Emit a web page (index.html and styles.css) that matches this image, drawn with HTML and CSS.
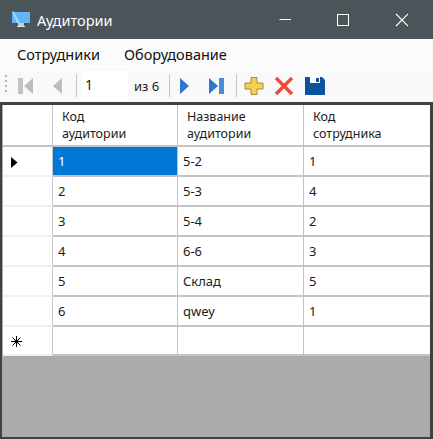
FILE: index.html
```html
<!DOCTYPE html>
<html>
<head>
  <meta charset="UTF-8">
  <title>Аудитории</title>
  <link rel="stylesheet" href="styles.css">
</head>
<body>
  <div class="window">
    <div class="titlebar">
      <svg class="app-icon" width="19" height="17" viewBox="0 0 19 17">
        <rect x="0" y="1" width="18" height="11" fill="#63b5f7"/>
        <path d="M0 0 L5 12 H8 L2 1 Z" fill="#a9d8fb"/>
        <rect x="6" y="12" width="6" height="3" fill="#c4ccd1"/>
        <rect x="5" y="15" width="8" height="1" fill="#e3e7ea"/>
      </svg>
      <span class="title">Аудитории</span>
      <div class="win-buttons">
        <svg width="14" height="14" viewBox="0 0 14 14"><path d="M1.5 6.5 H13" stroke="#fff" stroke-width="1"/></svg>
        <svg width="14" height="14" viewBox="0 0 14 14"><rect x="1.5" y="1.5" width="11" height="11" fill="none" stroke="#fff"/></svg>
        <svg width="14" height="14" viewBox="0 0 14 14"><path d="M2 1 L14 13 M14 1 L2 13" stroke="#fff" stroke-width="1.1"/></svg>
      </div>
    </div>

    <div class="menu">
      <span>Сотрудники</span>
      <span>Оборудование</span>
    </div>

    <div class="toolbar">
      <svg class="grip" width="4" height="24" viewBox="0 0 4 24">
        <g fill="#b4b4b4"><rect x="1" y="1" width="2" height="2"/><rect x="1" y="6" width="2" height="2"/><rect x="1" y="11" width="2" height="2"/><rect x="1" y="16" width="2" height="2"/></g>
      </svg>
      <svg class="tool first" width="18" height="20" viewBox="0 0 18 20"><rect x="1" y="2" width="5" height="16" fill="#c2c2c2"/><path d="M16 2 V18 L7 10 Z" fill="#bdbdbd"/></svg>
      <svg class="tool prev" width="11" height="20" viewBox="0 0 11 20"><path d="M10 2 V18 L1 10 Z" fill="#bdbdbd"/></svg>
      <div class="sep"></div>
      <div class="pos-input">1</div>
      <span class="pos-total">из 6</span>
      <div class="sep"></div>
      <svg class="tool next" width="11" height="20" viewBox="0 0 11 20"><path d="M1 2 V18 L10 10 Z" fill="#2f76d2"/></svg>
      <svg class="tool last" width="18" height="20" viewBox="0 0 18 20"><path d="M1 2 V18 L10 10 Z" fill="#2f76d2"/><rect x="11" y="2" width="5" height="16" fill="#4a8bdc"/></svg>
      <div class="sep"></div>
      <svg class="tool add" width="20" height="20" viewBox="0 0 20 20"><path d="M7 1.5 H13 V7 H19 V13 H13 V18.5 H7 V13 H1 V7 H7 Z" fill="#f3cf55" stroke="#a98a35" stroke-width="1"/></svg>
      <svg class="tool del" width="20" height="20" viewBox="0 0 20 20"><path d="M2 2 L18 18 M18 2 L2 18" stroke="#ee4a36" stroke-width="3.4"/></svg>
      <svg class="tool save" width="20" height="20" viewBox="0 0 20 20"><path d="M0 1 H17 L20 4 V19 H0 Z" fill="#0b539f"/><rect x="5" y="1" width="10" height="6" fill="#fff"/><rect x="11" y="2" width="3" height="4" fill="#0b539f"/></svg>
    </div>

    <div class="grid-area">
      <div class="grid">
        <div class="corner"></div>
        <div class="head">Код<br>аудитории</div>
        <div class="head">Название<br>аудитории</div>
        <div class="head">Код<br>сотрудника</div>

        <div class="rowhead"><svg class="current" width="7" height="11" viewBox="0 0 7 11"><path d="M0 0 L6.5 5.5 L0 11 Z" fill="#000"/></svg></div>
        <div class="cell selected">1</div><div class="cell">5-2</div><div class="cell">1</div>

        <div class="rowhead"></div>
        <div class="cell">2</div><div class="cell">5-3</div><div class="cell">4</div>

        <div class="rowhead"></div>
        <div class="cell">3</div><div class="cell">5-4</div><div class="cell">2</div>

        <div class="rowhead"></div>
        <div class="cell">4</div><div class="cell">6-6</div><div class="cell">3</div>

        <div class="rowhead"></div>
        <div class="cell">5</div><div class="cell">Склад</div><div class="cell">5</div>

        <div class="rowhead"></div>
        <div class="cell">6</div><div class="cell">qwey</div><div class="cell">1</div>

        <div class="rowhead"><svg class="current" width="11" height="11" viewBox="0 0 11 11"><path d="M5.5 0 V11 M0 5.5 H11 M1.5 1.5 L9.5 9.5 M9.5 1.5 L1.5 9.5" stroke="#000" stroke-width="1"/><circle cx="5.5" cy="5.5" r="2" fill="#000"/></svg></div>
        <div class="cell"></div><div class="cell"></div><div class="cell"></div>
      </div>
    </div>
  </div>
</body>
</html>
```

FILE: styles.css
```css
html, body { margin: 0; padding: 0; }
body { font-family: "Noto Sans", "Open Sans", sans-serif; font-size: 13px; color: #1c1c1c; }

.window {
  width: 433px; height: 439px;
  display: flex; flex-direction: column;
  background: #fff;
  overflow: hidden;
}

.titlebar {
  height: 39px; flex: none;
  display: flex; align-items: center;
  padding-left: 12px;
  background: #4a5459;
  color: #fff;
}
.app-icon { margin-right: 6px; }
.title { font-size: 14.5px; }
.win-buttons {
  margin-left: auto;
  width: 170px;
  display: flex; justify-content: space-between;
  padding: 0 25px 0 15px;
  box-sizing: border-box;
}

.menu {
  height: 30px; flex: none;
  display: flex; align-items: center; gap: 24px;
  padding-left: 17px;
  font-size: 14.5px;
  color: #111;
  background: #fbfbfb;
}

.toolbar {
  height: 33px; flex: none;
  display: flex; align-items: center;
  padding-left: 4px;
  background: #f9f9f9;
}
.grip { margin-right: 9px; }
.first { margin-right: 17px; }
.prev { margin-right: 13px; }
.sep { width: 1px; height: 23px; background: #c6c6c6; flex: none; }
.pos-input {
  width: 47px; height: 30px; margin-left: 4px;
  box-sizing: border-box;
  padding-left: 4px;
  line-height: 28px;
  background: #fff;
  font-size: 14px;
}
.pos-total { margin-left: 6px; width: 35px; font-size: 13px; }
.next { margin-left: 9px; margin-right: 18px; }
.last { margin-right: 10px; }
.add { margin-left: 7px; margin-right: 10px; }
.del { margin-right: 11px; }

.grid-area {
  flex: 1;
  background: #ababab;
  border: 2px solid #3c4144;
  border-top-width: 3px;
  border-right-width: 3px;
  padding-left: 1px;
}
.grid {
  display: grid;
  grid-template-columns: 50px 125px 126px 126px;
  grid-template-rows: 42px repeat(6, 30px) 29px;
  width: 427px;
  background: #fff;
}
.corner, .head, .rowhead, .cell { box-sizing: border-box; background: #fff; }
.corner, .head {
  border-bottom: 2px solid #c4c4c4;
  border-right: 1px solid #c4c4c4;
}
.head {
  padding: 3px 0 0 9px;
  line-height: 17px;
  font-size: 12.5px;
}
.rowhead {
  display: flex; align-items: center;
  padding-left: 8px;
  border-bottom: 2px solid #f0f0f0;
  border-right: 1px solid #c4c4c4;
}
.current { margin-top: 2px; }
.cell {
  display: flex; align-items: center;
  padding-left: 5px;
  border-bottom: 2px solid #c4c4c4;
  border-right: 1px solid #c4c4c4;
}
.cell.selected { background: #0078d7; color: #fff; }
.head:nth-child(4n), .cell:nth-child(4n) { border-right: none; }
```
